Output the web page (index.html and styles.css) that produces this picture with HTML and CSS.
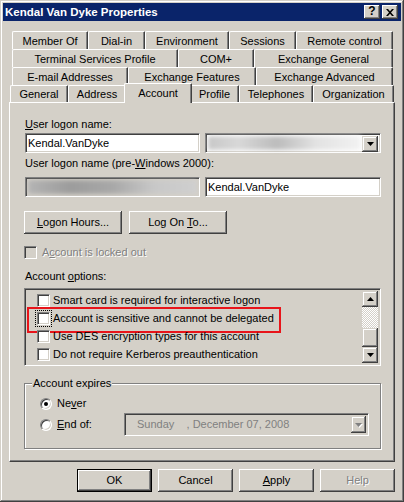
FILE: index.html
```html
<!DOCTYPE html>
<html lang="en">

<head>
    <meta charset="UTF-8">
    <title>Kendal Van Dyke Properties</title>
    <link rel="stylesheet" href="styles.css">
</head>

<body>
    <div class="window">
        <div class="titlebar">
            <span class="title">Kendal Van Dyke Properties</span>
            <div class="caption-btns">
                <span class="cap-btn help">?</span>
                <span class="cap-btn">
                    <svg width="8" height="7" viewBox="0 0 8 7"><path d="M0 0h2l2 2.2L6 0h2L5 3.5 8 7H6L4 4.8 2 7H0l3-3.5z" fill="#000"/></svg>
                </span>
            </div>
        </div>

        <div class="content">
            <div class="tabs">
                <div class="tab-row row1">
                    <div class="tab">Member Of</div>
                    <div class="tab">Dial-in</div>
                    <div class="tab">Environment</div>
                    <div class="tab">Sessions</div>
                    <div class="tab">Remote control</div>
                </div>
                <div class="tab-row row2">
                    <div class="tab">Terminal Services Profile</div>
                    <div class="tab">COM+</div>
                    <div class="tab">Exchange General</div>
                </div>
                <div class="tab-row row3">
                    <div class="tab">E-mail Addresses</div>
                    <div class="tab">Exchange Features</div>
                    <div class="tab">Exchange Advanced</div>
                </div>
                <div class="tab-row row4">
                    <div class="tab">General</div>
                    <div class="tab">Address</div>
                    <div class="tab selected">Account</div>
                    <div class="tab">Profile</div>
                    <div class="tab">Telephones</div>
                    <div class="tab">Organization</div>
                </div>
            </div>

            <div class="panel">
                <div class="label first"><u>U</u>ser logon name:</div>
                <div class="field-row">
                    <div class="field sunken">Kendal.VanDyke</div>
                    <div class="combo sunken">
                        <div class="blur light"></div>
                        <span class="drop-btn">
                            <svg width="7" height="4" viewBox="0 0 7 4"><path d="M0 0h7L3.5 4z" fill="#000"/></svg>
                        </span>
                    </div>
                </div>

                <div class="label second">User logon name (pre-<u>W</u>indows 2000):</div>
                <div class="field-row">
                    <div class="field sunken greyed">
                        <div class="blur dark"></div>
                    </div>
                    <div class="field wide sunken">Kendal.VanDyke</div>
                </div>

                <div class="button-row">
                    <span class="btn wide-btn"><span><u>L</u>ogon Hours...</span></span>
                    <span class="btn wide-btn"><span>Log On <u>T</u>o...</span></span>
                </div>

                <div class="check-line disabled">
                    <span class="checkbox off"></span>
                    <span>A<u>c</u>count is locked out</span>
                </div>

                <div class="label options">Account <u>o</u>ptions:</div>
                <div class="listbox sunken">
                    <div class="list-items">
                        <div class="list-item">
                            <span class="checkbox"></span>
                            <span>Smart card is required for interactive logon</span>
                        </div>
                        <div class="list-item marked">
                            <span class="checkbox focused"></span>
                            <span>Account is sensitive and cannot be delegated</span>
                        </div>
                        <div class="list-item">
                            <span class="checkbox"></span>
                            <span>Use DES encryption types for this account</span>
                        </div>
                        <div class="list-item">
                            <span class="checkbox"></span>
                            <span>Do not require Kerberos preauthentication</span>
                        </div>
                    </div>
                    <div class="scrollbar">
                        <span class="scroll-btn">
                            <svg width="7" height="4" viewBox="0 0 7 4"><path d="M0 4h7L3.5 0z" fill="#000"/></svg>
                        </span>
                        <div class="scroll-track"></div>
                        <span class="scroll-thumb"></span>
                        <span class="scroll-btn">
                            <svg width="7" height="4" viewBox="0 0 7 4"><path d="M0 0h7L3.5 4z" fill="#000"/></svg>
                        </span>
                    </div>
                </div>

                <fieldset class="group">
                    <legend>Account expires</legend>
                    <div class="radio-line">
                        <span class="radio checked"></span>
                        <span>Ne<u>v</u>er</span>
                    </div>
                    <div class="radio-line">
                        <span class="radio"></span>
                        <span class="radio-label"><u>E</u>nd of:</span>
                        <div class="datepicker sunken">
                            <span class="date-text">Sunday&nbsp;&nbsp;&nbsp;&nbsp;, December 07, 2008</span>
                            <span class="drop-btn off">
                                <svg width="7" height="4" viewBox="0 0 7 4"><path d="M0 0h7L3.5 4z" fill="#808080"/></svg>
                            </span>
                        </div>
                    </div>
                </fieldset>
            </div>

            <div class="actions">
                <span class="btn default">OK</span>
                <span class="btn">Cancel</span>
                <span class="btn"><span><u>A</u>pply</span></span>
                <span class="btn off-text">Help</span>
            </div>
        </div>
    </div>
</body>

</html>
```

FILE: styles.css
```css
* {
    box-sizing: border-box;
}

body {
    margin: 0;
    font-family: "Liberation Sans", Arial, sans-serif;
    font-size: 11px;
    line-height: 13px;
    color: #000;
    background: #d4d0c8;
}

u {
    text-decoration-thickness: 1px;
    text-underline-offset: 1px;
}

.window {
    width: 404px;
    height: 502px;
    padding: 3px;
    background: #d4d0c8;
    box-shadow: inset -1px -1px #404040, inset 1px 1px #d4d0c8,
        inset -2px -2px #808080, inset 2px 2px #fff;
}

.titlebar {
    height: 18px;
    display: flex;
    align-items: center;
    justify-content: space-between;
    padding: 0 3px 0 2px;
    background: #0a246a;
}

.title {
    color: #fff;
    font-weight: bold;
    font-size: 11.5px;
}

.caption-btns {
    display: flex;
    gap: 2px;
}

.cap-btn {
    width: 16px;
    height: 14px;
    display: flex;
    align-items: center;
    justify-content: center;
    background: #d4d0c8;
    font-weight: bold;
    font-size: 12px;
    box-shadow: inset -1px -1px #404040, inset 1px 1px #fff,
        inset -2px -2px #808080, inset 2px 2px #d4d0c8;
}

.cap-btn.help {
    padding-bottom: 1px;
}

.content {
    padding: 10px 6px 0 6px;
}

/* tabs */

.tab-row {
    display: grid;
    height: 18px;
    margin-left: 3px;
}

.row1 {
    grid-template-columns: 76px 57px 84px 67px 97px;
}

.row2 {
    grid-template-columns: 166px 76px 139px;
}

.row3 {
    grid-template-columns: 116px 128px 137px;
}

.row4 {
    margin-left: 1px;
    height: 17px;
    grid-template-columns: 58px 58px 64px 49px 74px 81px;
}

.tab {
    display: flex;
    align-items: center;
    justify-content: center;
    white-space: nowrap;
    border-top: 1px solid #fff;
    border-left: 1px solid #fff;
    border-right: 1px solid #404040;
    border-top-left-radius: 2px;
    border-top-right-radius: 1px;
    box-shadow: inset -1px 0 #808080;
    padding-top: 1px;
}

.tab.selected {
    position: relative;
    z-index: 1;
    margin: -2px -2px -1px -2px;
    background: #d4d0c8;
    padding-bottom: 2px;
}

/* panel */

.panel {
    height: 360px;
    display: flex;
    flex-direction: column;
    align-items: flex-start;
    padding: 0 0 0 14px;
    border-top: 1px solid #fff;
    border-left: 1px solid #fff;
    border-right: 1px solid #404040;
    border-bottom: 1px solid #404040;
    box-shadow: inset -1px -1px #808080;
}

.label {
    margin-left: 1px;
}

.label.first {
    margin-top: 15px;
}

.label.second {
    margin-top: 4px;
}

.label.options {
    margin-top: 11px;
}

.sunken {
    border: 1px solid;
    border-color: #808080 #fff #fff #808080;
    box-shadow: inset 1px 1px #404040, inset -1px -1px #d4d0c8;
}

.field-row {
    display: flex;
    gap: 5px;
    margin: 2px 0 0 1px;
}

.label.second + .field-row {
    margin-top: 7px;
}

.field {
    width: 175px;
    height: 20px;
    padding: 3px 2px 0 2px;
    background: #fff;
    overflow: hidden;
}

.field.wide {
    width: 176px;
}

.field.greyed {
    padding: 2px;
    background: #d4d0c8;
}

.combo {
    width: 176px;
    height: 20px;
    display: flex;
    padding: 2px;
    gap: 1px;
    background: #fff;
}

.blur {
    flex: 1;
    height: 100%;
    filter: blur(2px);
}

.blur.light {
    background: linear-gradient(90deg, #c8c8c8 0%, #d8d8d8 20%, #bcbcbc 45%, #e2e2e2 70%, #f2f2f2 100%);
}

.blur.dark {
    background: linear-gradient(90deg, #b4b4b4 0%, #9c9c9c 25%, #a8a8a8 50%, #c8c8c8 75%, #cfcfcf 100%);
}

.drop-btn {
    width: 16px;
    height: 16px;
    display: flex;
    align-items: center;
    justify-content: center;
    background: #d4d0c8;
    box-shadow: inset -1px -1px #404040, inset 1px 1px #d4d0c8,
        inset -2px -2px #808080, inset 2px 2px #fff;
}

/* buttons */

.btn {
    width: 75px;
    height: 23px;
    display: flex;
    align-items: center;
    justify-content: center;
    background: #d4d0c8;
    box-shadow: inset -1px -1px #404040, inset 1px 1px #fff,
        inset -2px -2px #808080, inset 2px 2px #d4d0c8;
}

.btn.default {
    border: 1px solid #000;
    box-shadow: inset -1px -1px #404040, inset 1px 1px #fff,
        inset -2px -2px #808080;
}

.off-text {
    color: #808080;
    text-shadow: 1px 1px #fff;
}

.button-row {
    display: flex;
    gap: 7px;
    margin-top: 14px;
}

.wide-btn {
    width: 98px;
}

/* checks and radios */

.check-line {
    display: flex;
    align-items: center;
    gap: 5px;
    margin-top: 12px;
}

.check-line.disabled {
    color: #808080;
    text-shadow: 1px 1px #fff;
}

.checkbox {
    width: 13px;
    height: 13px;
    flex: none;
    background: #fff;
    border: 1px solid;
    border-color: #808080 #fff #fff #808080;
    box-shadow: inset 1px 1px #404040, inset -1px -1px #d4d0c8;
}

.checkbox.off {
    background: #d4d0c8;
}

.checkbox.focused {
    outline: 1px dotted #000;
    outline-offset: 1px;
}

.listbox {
    width: 357px;
    height: 78px;
    margin-top: 5px;
    display: flex;
    padding: 2px;
    background: #d4d0c8;
}

.list-items {
    flex: 1;
}

.list-item {
    position: relative;
    height: 18px;
    display: flex;
    align-items: center;
    gap: 3px;
    padding-left: 10px;
}

.list-item.marked::after {
    content: "";
    position: absolute;
    left: 0;
    top: -2px;
    width: 250px;
    height: 22px;
    border: 2px solid #e8141a;
}

.scrollbar {
    width: 16px;
    display: flex;
    flex-direction: column;
}

.scroll-btn {
    height: 16px;
    display: flex;
    align-items: center;
    justify-content: center;
    background: #d4d0c8;
    box-shadow: inset -1px -1px #404040, inset 1px 1px #d4d0c8,
        inset -2px -2px #808080, inset 2px 2px #fff;
}

.scroll-track {
    height: 22px;
    background: conic-gradient(#fff 25%, #d4d0c8 0 50%, #fff 0 75%, #d4d0c8 0) 0 0 / 2px 2px;
}

.scroll-thumb {
    height: 20px;
    background: #d4d0c8;
    box-shadow: inset -1px -1px #404040, inset 1px 1px #d4d0c8,
        inset -2px -2px #808080, inset 2px 2px #fff;
}

/* account expires group */

.group {
    width: 357px;
    height: 72px;
    margin: 11px 0 0 0;
    padding: 3px 0 0 15px;
    border: 1px solid #808080;
    box-shadow: 1px 1px #fff, inset 1px 1px #fff;
}

.group legend {
    padding: 0 1px;
    margin-left: -8px;
    background: #d4d0c8;
}

.radio-line {
    display: flex;
    align-items: center;
    gap: 5px;
    height: 21px;
}

.radio {
    position: relative;
    width: 12px;
    height: 12px;
    flex: none;
    border-radius: 50%;
    background: #fff;
    border: 1px solid;
    border-color: #808080 #fff #fff #808080;
    box-shadow: inset 1px 1px #404040, inset -1px -1px #d4d0c8;
}

.radio.checked::after {
    content: "";
    position: absolute;
    left: 3px;
    top: 3px;
    width: 4px;
    height: 4px;
    border-radius: 50%;
    background: #000;
}

.radio-label {
    width: 62px;
}

.datepicker {
    width: 245px;
    height: 23px;
    display: flex;
    align-items: center;
    justify-content: space-between;
    padding: 0 2px 0 12px;
    color: #808080;
}

.drop-btn.off {
    width: 15px;
    height: 17px;
}

.drop-btn.off svg {
    filter: drop-shadow(1px 1px 0 #fff);
}

/* dialog buttons */

.actions {
    display: flex;
    justify-content: flex-end;
    gap: 6px;
    margin-top: 7px;
}
```
